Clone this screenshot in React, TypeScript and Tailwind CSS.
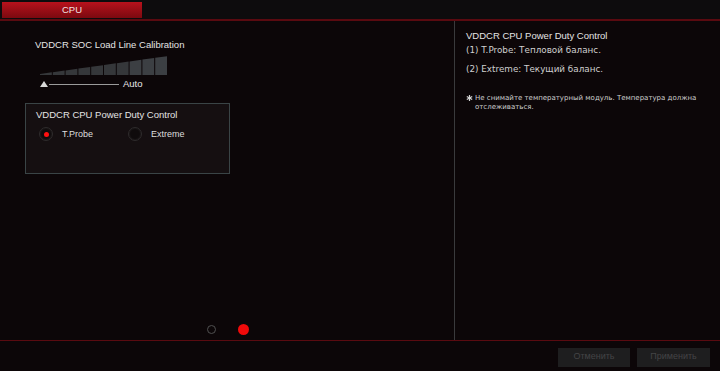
import React from "react";

const bars = Array.from({ length: 10 }, (_, i) => i);

function LoadLineSlider() {
  // staircase of bars, top edge follows one ramp
  const w = 128;
  const bw = w / bars.length;
  const hAt = (x: number) => 1 + (x / w) * 18;
  return (
    <svg width="130" height="20" viewBox="0 0 130 20" className="block">
      {bars.map((i) => {
        const x0 = i * bw;
        const x1 = x0 + bw - 1;
        const pts = `${x0},20 ${x0},${20 - hAt(x0)} ${x1},${20 - hAt(x1)} ${x1},20`;
        return <polygon key={i} points={pts} fill={i > 6 ? "#3c3f43" : "#35373a"} />;
      })}
    </svg>
  );
}

function Radio({ checked, label }: { checked?: boolean; label: string }) {
  return (
    <div className="flex items-center gap-[9px]">
      <span className="w-[14px] h-[14px] rounded-full border border-[#2e2b2c] bg-[#0f0b0c] flex items-center justify-center shadow-[inset_0_0_2px_rgba(255,255,255,0.12)]">
        {checked && <span className="w-[5px] h-[5px] rounded-full bg-[#ff1010]" />}
      </span>
      <span className="text-[9px] leading-[14px] text-[#dedede]">{label}</span>
    </div>
  );
}

export default function App() {
  return (
    <div className="w-[720px] h-[371px] bg-[#0c0608] flex flex-col overflow-hidden font-['Liberation_Sans',Arial,sans-serif] text-[#dcdcdc]">
      {/* tab bar */}
      <div className="h-[21px] shrink-0 bg-[#0d0c0d] border-b-2 border-[#5a0a10] flex items-start pt-[2px] pl-[2px]">
        <div className="w-[140px] h-[16px] bg-gradient-to-b from-[#b8121c] to-[#7c0a10] flex items-center justify-center text-[9.5px] text-[#f0e0e0]">
          CPU
        </div>
      </div>

      {/* body */}
      <div className="flex h-[320px] shrink-0 border-b border-[#5a0a10]">
        <div className="w-[455px] border-r border-[#3a3a3c] flex flex-col">
          <div className="pl-[35px] pt-[17px] text-[9.5px] leading-[14px] text-[#e4e4e4]">VDDCR SOC Load Line Calibration</div>
          <div className="pl-[40px] pt-[3px]">
            <LoadLineSlider />
            <div className="flex items-center h-[14px] mt-[2px]">
              <svg width="8" height="6" viewBox="0 0 8 6" className="block">
                <polygon points="4,0 8,6 0,6" fill="#d8d8d8" />
              </svg>
              <div className="w-[70px] h-px bg-[#9a9a9a] ml-[1px]" />
              <span className="text-[9.5px] text-[#e8e8e8] ml-[4px]">Auto</span>
            </div>
          </div>

          <div className="ml-[25px] mt-[12px] w-[205px] h-[71px] border border-[#3a4446] bg-[#150f11] px-[10px] pt-[4px]">
            <div className="text-[9.5px] leading-[14px] text-[#e4e4e4]">VDDCR CPU Power Duty Control</div>
            <div className="flex items-center mt-[5px] pl-[3px]">
              <div className="w-[89px]">
                <Radio checked label="T.Probe" />
              </div>
              <Radio label="Extreme" />
            </div>
          </div>

          <div className="flex-1" />
          <div className="flex items-center gap-[22px] pl-[207px] pb-[5px]">
            <span className="w-[9px] h-[9px] rounded-full border-[1.5px] border-[#505050]" />
            <span className="w-[11px] h-[11px] rounded-full bg-[#f00a0a]" />
          </div>
        </div>

        <div className="flex-1 pl-[11px] pt-[8px] font-['DejaVu_Sans',Verdana,sans-serif]">
          <div className="text-[9.5px] leading-[14px] text-[#e4e4e4] font-['Liberation_Sans',Arial,sans-serif]">VDDCR CPU Power Duty Control</div>
          <div className="text-[8.8px] leading-[12px] text-[#cfcfcf] mt-[1px]">(1) T.Probe: Тепловой баланс.</div>
          <div className="text-[8.8px] leading-[12px] text-[#cfcfcf] mt-[7px]">(2) Extreme: Текущий баланс.</div>
          <div className="flex text-[7px] leading-[9px] text-[#cfcfcf] mt-[19px]">
            <svg width="9" height="9" viewBox="0 0 9 9" className="shrink-0">
              <g stroke="#d6d6d6" strokeWidth="1.2">
                <line x1="3.5" y1="1" x2="3.5" y2="7" />
                <line x1="0.8" y1="2.5" x2="6.2" y2="5.5" />
                <line x1="0.8" y1="5.5" x2="6.2" y2="2.5" />
              </g>
            </svg>
            <span className="w-[238px]">Не снимайте температурный модуль. Температура должна отслеживаться.</span>
          </div>
        </div>
      </div>

      {/* footer */}
      <div className="h-[30px] flex items-center justify-end gap-[7px] pr-[10px] pt-[2px]">
        <button className="w-[72px] h-[19px] bg-[#1e1e1f] text-[9px] text-[#444446]">Отменить</button>
        <button className="w-[73px] h-[19px] bg-[#1e1e1f] text-[9px] text-[#444446]">Применить</button>
      </div>
    </div>
  );
}
